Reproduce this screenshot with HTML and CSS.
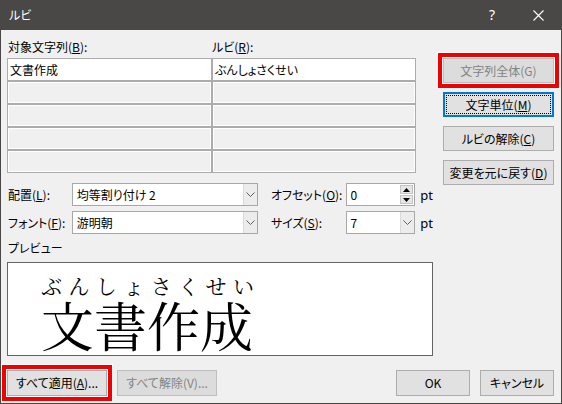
FILE: index.html
```html
<!DOCTYPE html>
<html lang="ja">
<head>
<meta charset="utf-8">
<title>ルビ</title>
<link rel="stylesheet" href="styles.css">
</head>
<body>
<div class="window">
  <div class="titlebar">
    <span class="title">ルビ</span>
    <span class="help">?</span>
    <span class="close"><svg width="11" height="11" viewBox="0 0 11 11"><path d="M0.5 0.5L10.5 10.5M10.5 0.5L0.5 10.5" stroke="#ffffff" stroke-width="1.1" fill="none"/></svg></span>
  </div>
  <div class="content">
    <div class="main">
      <div class="left">
        <div class="heads">
          <span class="head1">対象文字列(<u>B</u>):</span>
          <span class="head2">ルビ(<u>R</u>):</span>
        </div>
        <div class="table">
          <div class="cell active">文書作成</div>
          <div class="cell active">ぶんしょさくせい</div>
          <div class="cell off"></div><div class="cell off"></div>
          <div class="cell off"></div><div class="cell off"></div>
          <div class="cell off"></div><div class="cell off"></div>
          <div class="cell off"></div><div class="cell off"></div>
        </div>
        <div class="formrow first">
          <span class="lab1">配置(<u>L</u>):</span>
          <div class="combo wide"><span class="val">均等割り付け 2</span><span class="drop"><svg width="9" height="5" viewBox="0 0 9 5"><path d="M0.5 0.5L4.5 4.5L8.5 0.5" stroke="#606060" fill="none"/></svg></span></div>
          <span class="lab2">オフセット(<u>O</u>):</span>
          <div class="combo small"><span class="val">0</span><span class="spinbtns"><span class="sb"><svg width="7" height="4" viewBox="0 0 7 4"><path d="M3.5 0L7 4H0Z" fill="#000"/></svg></span><span class="sb"><svg width="7" height="4" viewBox="0 0 7 4"><path d="M0 0H7L3.5 4Z" fill="#000"/></svg></span></span></div>
          <span class="unit">pt</span>
        </div>
        <div class="formrow second">
          <span class="lab1">フォント(<u>F</u>):</span>
          <div class="combo wide"><span class="val">游明朝</span><span class="drop"><svg width="9" height="5" viewBox="0 0 9 5"><path d="M0.5 0.5L4.5 4.5L8.5 0.5" stroke="#606060" fill="none"/></svg></span></div>
          <span class="lab2">サイズ(<u>S</u>):</span>
          <div class="combo small"><span class="val">7</span><span class="drop"><svg width="9" height="5" viewBox="0 0 9 5"><path d="M0.5 0.5L4.5 4.5L8.5 0.5" stroke="#606060" fill="none"/></svg></span></div>
          <span class="unit">pt</span>
        </div>
        <div class="plabel">プレビュー</div>
        <div class="preview">
          <div class="ruby"><span>ぶ</span><span>ん</span><span>し</span><span>ょ</span><span>さ</span><span>く</span><span>せ</span><span>い</span></div>
          <div class="base">文書作成</div>
        </div>
      </div>
      <div class="side">
        <div class="btn disabled marked">文字列全体(G)</div>
        <div class="btn default">文字単位(<u>M</u>)</div>
        <div class="btn">ルビの解除(<u>C</u>)</div>
        <div class="btn">変更を元に戻す(<u>D</u>)</div>
      </div>
    </div>
    <div class="footer">
      <div class="btn wide-btn marked">すべて適用(<u>A</u>)...</div>
      <div class="btn wide-btn disabled">すべて解除(V)...</div>
      <div class="spacer"></div>
      <div class="btn narrow-btn">OK</div>
      <div class="btn narrow-btn">キャンセル</div>
    </div>
  </div>
</div>
</body>
</html>
```

FILE: styles.css
```css
* { box-sizing: border-box; }

html, body {
  margin: 0;
  padding: 0;
  background: #f0f0f0;
}

body {
  font-family: "Noto Sans CJK JP", "Noto Sans", sans-serif;
  font-size: 12px;
  color: #000;
  font-feature-settings: "palt";
}

u {
  text-decoration: underline;
  text-underline-offset: 1px;
}

.window {
  width: 562px;
  height: 404px;
  border: 1px solid #4a4846;
  border-top: 0;
  background: #f0f0f0;
  display: flex;
  flex-direction: column;
}

.titlebar {
  height: 30px;
  background: #4a4846;
  color: #fff;
  display: flex;
  align-items: center;
  padding-left: 8px;
}

.title {
  font-size: 12px;
  line-height: 16px;
}

.help {
  margin-left: auto;
  width: 46px;
  text-align: center;
  font-family: "Noto Sans", sans-serif;
  font-size: 14px;
  line-height: 16px;
}

.close {
  width: 46px;
  height: 30px;
  display: flex;
  align-items: center;
  justify-content: center;
}

.content {
  flex: 1;
  padding: 9px 6px 0 6px;
  display: flex;
  flex-direction: column;
}

.main {
  display: flex;
}

.left {
  width: 426px;
  display: flex;
  flex-direction: column;
}

.heads {
  display: flex;
  line-height: 16px;
  height: 16px;
}

.head1 {
  width: 205px;
  padding-left: 1px;
}

.table {
  margin-top: 3px;
  width: 409px;
  display: grid;
  grid-template-columns: 205px 204px;
  grid-auto-rows: 23px;
}

.cell {
  border: 1px solid #acacac;
  padding-left: 2px;
  line-height: 21px;
  white-space: nowrap;
  overflow: hidden;
}

.cell.active {
  background: #fff;
}

.cell.off {
  background: #f0f0f0;
  box-shadow: inset 1px 1px 0 #fff, inset -1px -1px 0 #fff;
}

.formrow {
  display: flex;
  align-items: center;
  height: 23px;
}

.formrow.first { margin-top: 10px; }
.formrow.second { margin-top: 5px; }

.lab1 {
  width: 65px;
  padding-left: 1px;
  white-space: nowrap;
}

.lab2 {
  width: 75px;
  margin-left: 13px;
  white-space: nowrap;
}

.unit {
  margin-left: 5px;
  font-family: "Noto Sans", sans-serif;
  font-size: 13px;
}

.combo {
  height: 23px;
  border: 1px solid #a8a8a8;
  background: #fff;
  display: flex;
  align-items: stretch;
}

.combo.wide { width: 187px; }
.combo.small { width: 70px; }

.combo .val {
  flex: 1;
  padding-left: 4px;
  line-height: 21px;
  white-space: nowrap;
}

.drop {
  width: 14px;
  background: #ececec;
  border-left: 1px solid #dadada;
  display: flex;
  align-items: center;
  justify-content: center;
}

.spinbtns {
  width: 15px;
  display: flex;
  flex-direction: column;
  padding: 1px;
  gap: 1px;
}

.sb {
  flex: 1;
  background: #e6e6e6;
  border: 1px solid #c4c4c4;
  display: flex;
  align-items: center;
  justify-content: center;
}

.plabel {
  margin-top: 6px;
  line-height: 16px;
  height: 16px;
  padding-left: 1px;
}

.preview {
  margin-top: 6px;
  height: 94px;
  border: 1px solid #646464;
  background: #fff;
  padding: 11px 0 0 33px;
  font-feature-settings: normal;
  font-family: "Noto Serif CJK JP", "Noto Sans CJK JP", serif;
}

.ruby {
  width: 213px;
  display: flex;
  justify-content: space-between;
  font-size: 21px;
  line-height: 22px;
  height: 22px;
}

.base {
  margin-top: 2px;
  font-size: 53px;
  line-height: 53px;
  white-space: nowrap;
}

.side {
  margin-left: 10px;
  padding-top: 19px;
  width: 111px;
  display: flex;
  flex-direction: column;
  gap: 9px;
}

.btn {
  position: relative;
  height: 25px;
  background: #e1e1e1;
  border: 1px solid #adadad;
  display: flex;
  align-items: center;
  justify-content: center;
  white-space: nowrap;
  line-height: 16px;
}

.btn.disabled {
  color: #838383;
  background: #dcdcdc;
  border-color: #bfbfbf;
}

.btn.default {
  border: 2px solid #0078d7;
}

.btn.default::after {
  content: "";
  position: absolute;
  left: 1px;
  top: 1px;
  right: 1px;
  bottom: 1px;
  border: 1px dotted #000;
}

.btn.marked {
  box-shadow: 0 0 0 1px #fff, 0 0 0 5px #f00000, 0 0 0 6px #fff;
}

.footer {
  margin-top: 14px;
  display: flex;
  gap: 10px;
  padding-right: 1px;
}

.footer .btn {
  height: 26px;
}

.wide-btn { width: 100px; }
.narrow-btn { width: 74px; }

.spacer { flex: 1; }
```
